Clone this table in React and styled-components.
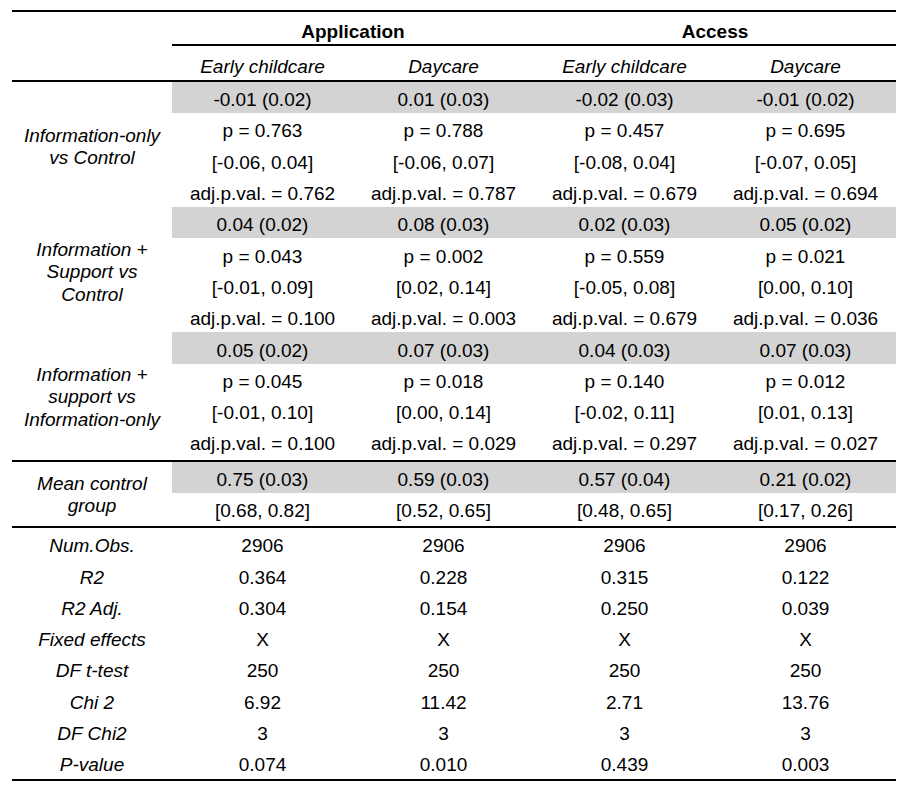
import React from "react";
import styled, { createGlobalStyle } from "styled-components";

const Global = createGlobalStyle`
  html, body { margin: 0; padding: 0; background: #fff; }
  body { font-family: "Liberation Sans", Arial, sans-serif; color: #000; }
`;

const Page = styled.div`
  padding: 10px 18px 0 12px;
`;

const Table = styled.div`
  width: 884px;
  border-top: 2px solid #000;
  border-bottom: 2px solid #000;
  font-size: 19px;
`;

const Grid = styled.div`
  display: grid;
  grid-template-columns: 160px repeat(4, 181px);
  grid-auto-rows: ${(p) => p.$row || "31.3px"};
  border-bottom: ${(p) => (p.$rule ? "2px solid #000" : "none")};
  padding-bottom: ${(p) => p.$gap || "0"};
`;

const Cell = styled.div`
  display: flex;
  align-items: center;
  justify-content: center;
  white-space: nowrap;
  padding-top: 5px;
  box-sizing: border-box;
  background: ${(p) => (p.$shade ? "#d3d3d3" : "transparent")};
`;

const SpanHead = styled(Cell)`
  grid-column: span 2;
  font-weight: bold;
  border-bottom: 2px solid #000;
  padding-top: 7px;
`;

const SubHead = styled(Cell)`
  font-style: italic;
`;

const ColHead = styled(SubHead)`
  padding-top: 7px;
`;

const Label = styled.div`
  grid-row: ${(p) => `1 / span ${p.$span || 1}`};
  grid-column: 1;
  display: flex;
  align-items: center;
  justify-content: center;
  text-align: center;
  font-style: italic;
  line-height: 22.5px;
  padding-top: 5px;
  box-sizing: border-box;
`;

const groups = [
  {
    label: ["Information-only", "vs Control"],
    rows: [
      ["-0.01 (0.02)", "0.01 (0.03)", "-0.02 (0.03)", "-0.01 (0.02)"],
      ["p = 0.763", "p = 0.788", "p = 0.457", "p = 0.695"],
      ["[-0.06, 0.04]", "[-0.06, 0.07]", "[-0.08, 0.04]", "[-0.07, 0.05]"],
      ["adj.p.val. = 0.762", "adj.p.val. = 0.787", "adj.p.val. = 0.679", "adj.p.val. = 0.694"],
    ],
  },
  {
    label: ["Information +", "Support vs", "Control"],
    rows: [
      ["0.04 (0.02)", "0.08 (0.03)", "0.02 (0.03)", "0.05 (0.02)"],
      ["p = 0.043", "p = 0.002", "p = 0.559", "p = 0.021"],
      ["[-0.01, 0.09]", "[0.02, 0.14]", "[-0.05, 0.08]", "[0.00, 0.10]"],
      ["adj.p.val. = 0.100", "adj.p.val. = 0.003", "adj.p.val. = 0.679", "adj.p.val. = 0.036"],
    ],
  },
  {
    label: ["Information +", "support vs", "Information-only"],
    rule: true,
    gap: "2px",
    rows: [
      ["0.05 (0.02)", "0.07 (0.03)", "0.04 (0.03)", "0.07 (0.03)"],
      ["p = 0.045", "p = 0.018", "p = 0.140", "p = 0.012"],
      ["[-0.01, 0.10]", "[0.00, 0.14]", "[-0.02, 0.11]", "[0.01, 0.13]"],
      ["adj.p.val. = 0.100", "adj.p.val. = 0.029", "adj.p.val. = 0.297", "adj.p.val. = 0.027"],
    ],
  },
  {
    label: ["Mean control", "group"],
    rule: true,
    gap: "2px",
    rows: [
      ["0.75 (0.03)", "0.59 (0.03)", "0.57 (0.04)", "0.21 (0.02)"],
      ["[0.68, 0.82]", "[0.52, 0.65]", "[0.48, 0.65]", "[0.17, 0.26]"],
    ],
  },
];

const stats = [
  ["Num.Obs.", "2906", "2906", "2906", "2906"],
  ["R2", "0.364", "0.228", "0.315", "0.122"],
  ["R2 Adj.", "0.304", "0.154", "0.250", "0.039"],
  ["Fixed effects", "X", "X", "X", "X"],
  ["DF t-test", "250", "250", "250", "250"],
  ["Chi 2", "6.92", "11.42", "2.71", "13.76"],
  ["DF Chi2", "3", "3", "3", "3"],
  ["P-value", "0.074", "0.010", "0.439", "0.003"],
];

export default function App() {
  return (
    <Page>
      <Global />
      <Table>
        <Grid $row="34px">
          <Cell />
          <SpanHead>Application</SpanHead>
          <SpanHead>Access</SpanHead>
        </Grid>
        <Grid $row="34px" $rule>
          <Cell />
          <ColHead>Early childcare</ColHead>
          <ColHead>Daycare</ColHead>
          <ColHead>Early childcare</ColHead>
          <ColHead>Daycare</ColHead>
        </Grid>
        {groups.map((g, gi) => (
          <Grid key={gi} $rule={g.rule} $gap={g.gap}>
            <Label $span={g.rows.length}>
              <span>
                {g.label.map((l, i) => (
                  <React.Fragment key={i}>
                    {i > 0 && <br />}
                    {l}
                  </React.Fragment>
                ))}
              </span>
            </Label>
            {g.rows.map((r, ri) =>
              r.map((v, ci) => (
                <Cell key={`${ri}-${ci}`} $shade={ri === 0} style={{ gridRow: ri + 1, gridColumn: ci + 2 }}>
                  {v}
                </Cell>
              ))
            )}
          </Grid>
        ))}
        <Grid>
          {stats.map((r, ri) =>
            r.map((v, ci) =>
              ci === 0 ? (
                <SubHead key={`${ri}-${ci}`}>{v}</SubHead>
              ) : (
                <Cell key={`${ri}-${ci}`}>{v}</Cell>
              )
            )
          )}
        </Grid>
      </Table>
    </Page>
  );
}
